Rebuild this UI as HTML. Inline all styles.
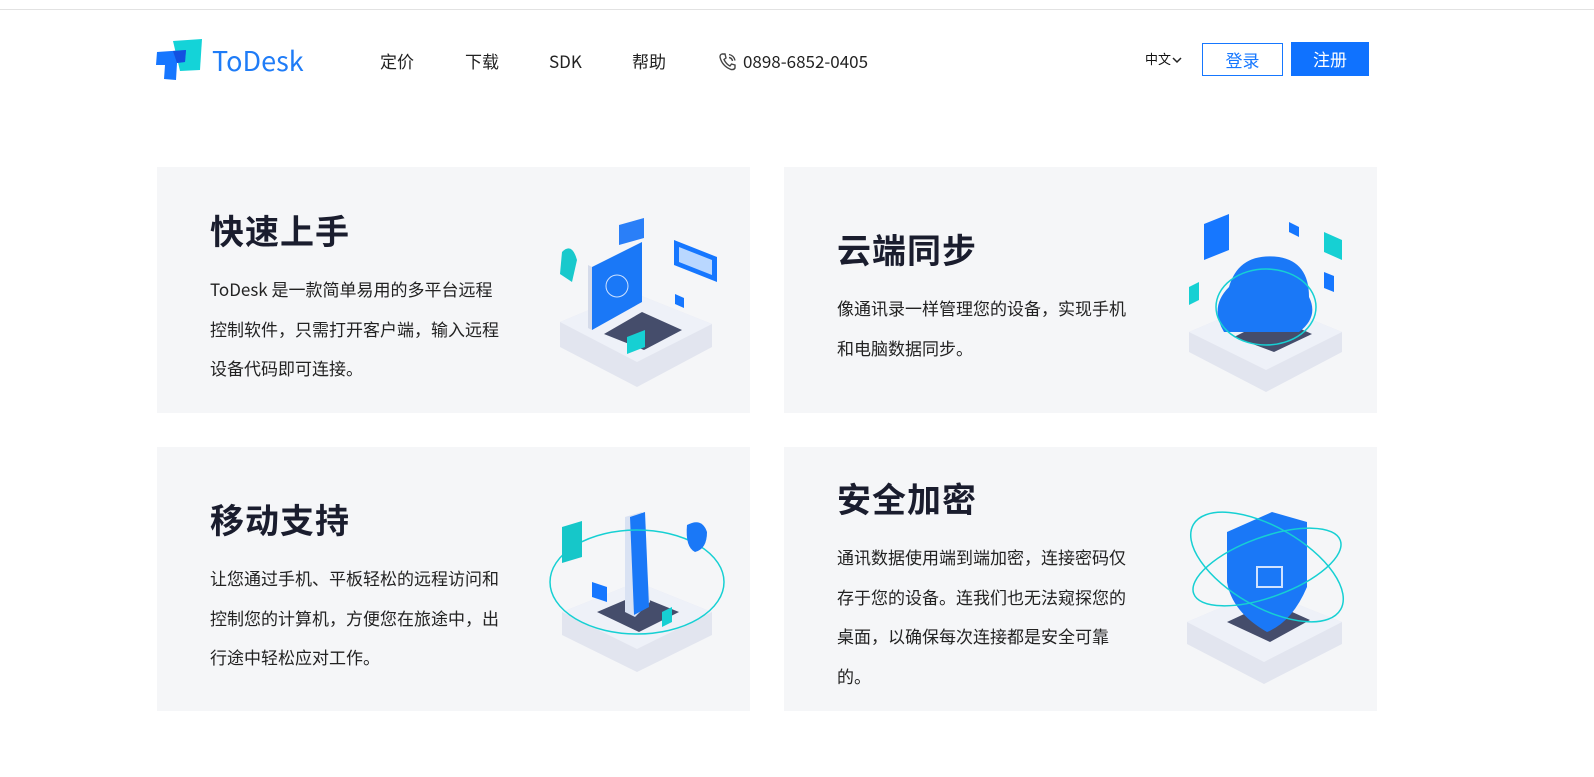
<!DOCTYPE html><html><head><meta charset="utf-8"><style>
*{margin:0;padding:0;box-sizing:border-box}
body{width:1594px;height:777px;background:#fff;font-family:"Noto Sans CJK SC","Liberation Sans",sans-serif;position:relative;overflow:hidden;color:#1a1d2b}
.topline{position:absolute;top:9px;left:0;width:1594px;height:1px;background:#e2e2e2}
.nav{position:absolute;top:48px;font-size:17px;line-height:26px;color:#222}
.card{position:absolute;background:#f5f6f8}
.card h2{position:absolute;left:53px;font-size:34px;line-height:48px;font-weight:bold;color:#1a1d2e;letter-spacing:1px}
.card p{position:absolute;left:53px;width:302px;font-size:17px;line-height:39.7px;color:#222}
.card svg{position:absolute}
</style></head><body>
<div class="topline"></div>
<svg style="position:absolute;left:156px;top:39px" width="48" height="42" viewBox="0 0 48 42">
<path d="M17 2 L46 0 L44 31 L24 32 Z" fill="#14d3d8"/>
<path d="M1 13 L30 11 L29 23 L21 24 L20 41 L8 40 L9 26 L0 26 Z" fill="#1676ff"/>
<path d="M17 12 L30 11 L29 23 L21 24 Z" fill="#1350e0"/>
</svg>
<div style="position:absolute;left:212px;top:42px;font-size:27px;line-height:36px;color:#1f7cf7">ToDesk</div>
<div class="nav" style="left:380px">定价</div>
<div class="nav" style="left:465px">下载</div>
<div class="nav" style="left:549px">SDK</div>
<div class="nav" style="left:632px">帮助</div>
<svg style="position:absolute;left:718px;top:52px" width="20" height="20" viewBox="0 0 20 20" fill="none" stroke="#444" stroke-width="1.4"><path d="M4 2 L7 2 L8 6 L6 7.5 Q8 12 12 14 L13.5 12 L17 13 L17 16 Q16 18 13 17.5 Q4 14 2 5 Q2 2.5 4 2Z"/><path d="M11 2.5 Q16 3.5 17 8.5 M11 5.5 Q14 6 14.5 9"/></svg>
<div class="nav" style="left:743px">0898-6852-0405</div>
<div style="position:absolute;left:1145px;top:50px;font-size:13px;line-height:18px;color:#111">中文<svg width="10" height="8" viewBox="0 0 10 8" style="margin-left:1px"><path d="M1 2 L5 6 L9 2" fill="none" stroke="#222" stroke-width="1.5"/></svg></div>
<div style="position:absolute;left:1202px;top:43px;width:81px;height:33px;border:1px solid #1677ff;color:#1677ff;font-size:17px;text-align:center;line-height:31px">登录</div>
<div style="position:absolute;left:1291px;top:42px;width:78px;height:34px;background:#0f72ff;color:#fff;font-size:17px;text-align:center;line-height:34px">注册</div>

<div class="card" style="left:157px;top:167px;width:593px;height:246px">
<h2 style="top:39px">快速上手</h2>
<p style="top:102px;width:296px">ToDesk 是一款简单易用的多平台远程控制软件，只需打开客户端，输入远程设备代码即可连接。</p>
<svg style="left:395px;top:45px" width="170" height="180" viewBox="0 0 170 180">
<path d="M8 110 L80 80 L160 112 L160 135 L85 175 L8 135Z" fill="#e2e5ef"/>
<path d="M8 110 L80 80 L160 112 L85 150Z" fill="#eef1f8"/>
<path d="M52 122 L90 100 L130 118 L92 138Z" fill="#454d6b"/>
<path d="M40 55 L90 30 L90 90 L40 118Z" fill="#1a78f7"/>
<path d="M36 53 L40 55 L40 118 L36 116Z" fill="#d5dbea"/>
<circle cx="65" cy="74" r="11" fill="none" stroke="#cfe2ff" stroke-width="1"/>
<path d="M67 5 L92 -2 L92 18 L67 25Z" fill="#2a7ff8" transform="translate(0,8)"/>
<path d="M122 28 L165 45 L165 70 L122 53Z" fill="#1677ff"/><path d="M127 35 L160 48 L160 63 L127 50Z" fill="#b9d7ff"/>
<path d="M10 40 Q20 30 25 48 L20 70 L8 62Z" fill="#18c9cc"/>
<path d="M75 125 L93 118 L93 135 L75 142Z" fill="#16d0d3"/>
<path d="M123 82 L132 86 L132 96 L123 92Z" fill="#1677ff"/>
</svg>
</div>

<div class="card" style="left:784px;top:167px;width:593px;height:246px">
<h2 style="top:58px">云端同步</h2>
<p style="top:121px">像通讯录一样管理您的设备，实现手机和电脑数据同步。</p>
<svg style="left:400px;top:45px" width="170" height="185" viewBox="0 0 170 185">
<path d="M5 120 L80 88 L158 120 L158 140 L82 180 L5 140Z" fill="#e2e5ef"/>
<path d="M5 120 L80 88 L158 120 L82 158Z" fill="#eef1f8"/>
<path d="M50 125 L90 105 L128 122 L90 140Z" fill="#454d6b"/>
<path d="M40 120 Q25 95 45 75 Q55 40 95 45 Q125 50 125 85 Q135 105 115 120Z" fill="#1a78f7"/>
<ellipse cx="82" cy="95" rx="50" ry="38" fill="none" stroke="#16d0d3" stroke-width="1.5"/>
<path d="M20 12 L45 2 L45 38 L20 48Z" fill="#1677ff"/>
<path d="M140 20 L158 28 L158 48 L140 40Z" fill="#16d0d3"/>
<path d="M140 60 L150 64 L150 80 L140 76Z" fill="#1677ff"/>
<path d="M5 75 L15 70 L15 88 L5 93Z" fill="#16d0d3"/>
<path d="M105 10 L115 15 L115 25 L105 20Z" fill="#1677ff"/>
</svg>
</div>

<div class="card" style="left:157px;top:447px;width:593px;height:264px">
<h2 style="top:48px">移动支持</h2>
<p style="top:111px">让您通过手机、平板轻松的远程访问和控制您的计算机，方便您在旅途中，出行途中轻松应对工作。</p>
<svg style="left:390px;top:60px" width="180" height="170" viewBox="0 0 180 170">
<path d="M15 105 L90 75 L165 105 L165 128 L90 165 L15 128Z" fill="#e2e5ef"/>
<path d="M15 105 L90 75 L165 105 L90 142Z" fill="#eef1f8"/>
<path d="M50 105 L90 88 L132 105 L92 125Z" fill="#454d6b"/>
<path d="M78 10 L95 5 L103 95 L88 110 L78 105Z" fill="#d9e2f3"/>
<path d="M83 10 L98 5 L102 100 L87 108Z" fill="#1a78f7"/>
<ellipse cx="90" cy="75" rx="87" ry="52" fill="none" stroke="#16d0d3" stroke-width="1.5"/>
<path d="M15 20 L35 14 L35 50 L15 56Z" fill="#16c7c9"/>
<path d="M140 18 Q155 10 160 25 Q160 42 148 45 Q138 40 140 18Z" fill="#1a78f7"/>
<path d="M45 75 L60 80 L60 95 L45 90Z" fill="#1677ff"/>
<path d="M115 105 L125 100 L125 115 L115 120Z" fill="#16d0d3"/>
</svg>
</div>

<div class="card" style="left:784px;top:447px;width:593px;height:264px">
<h2 style="top:27px">安全加密</h2>
<p style="top:90px">通讯数据使用端到端加密，连接密码仅存于您的设备。连我们也无法窥探您的桌面，以确保每次连接都是安全可靠的。</p>
<svg style="left:398px;top:55px" width="175" height="185" viewBox="0 0 175 185">
<path d="M5 120 L80 88 L160 120 L160 142 L82 182 L5 142Z" fill="#e2e5ef"/>
<path d="M5 120 L80 88 L160 120 L82 160Z" fill="#eef1f8"/>
<path d="M45 120 L88 100 L128 118 L88 140Z" fill="#454d6b"/>
<path d="M45 30 L90 10 L125 20 L125 85 Q110 120 85 130 Q50 110 45 80Z" fill="#1a78f7"/>
<rect x="75" y="65" width="25" height="20" fill="none" stroke="#cfe2ff" stroke-width="2"/>
<ellipse cx="85" cy="65" rx="85" ry="40" fill="none" stroke="#16d0d3" stroke-width="1.5" transform="rotate(30 85 65)"/>
<ellipse cx="85" cy="65" rx="78" ry="30" fill="none" stroke="#16d0d3" stroke-width="1.5" transform="rotate(-20 85 65)"/>
</svg>
</div>
</body></html>
